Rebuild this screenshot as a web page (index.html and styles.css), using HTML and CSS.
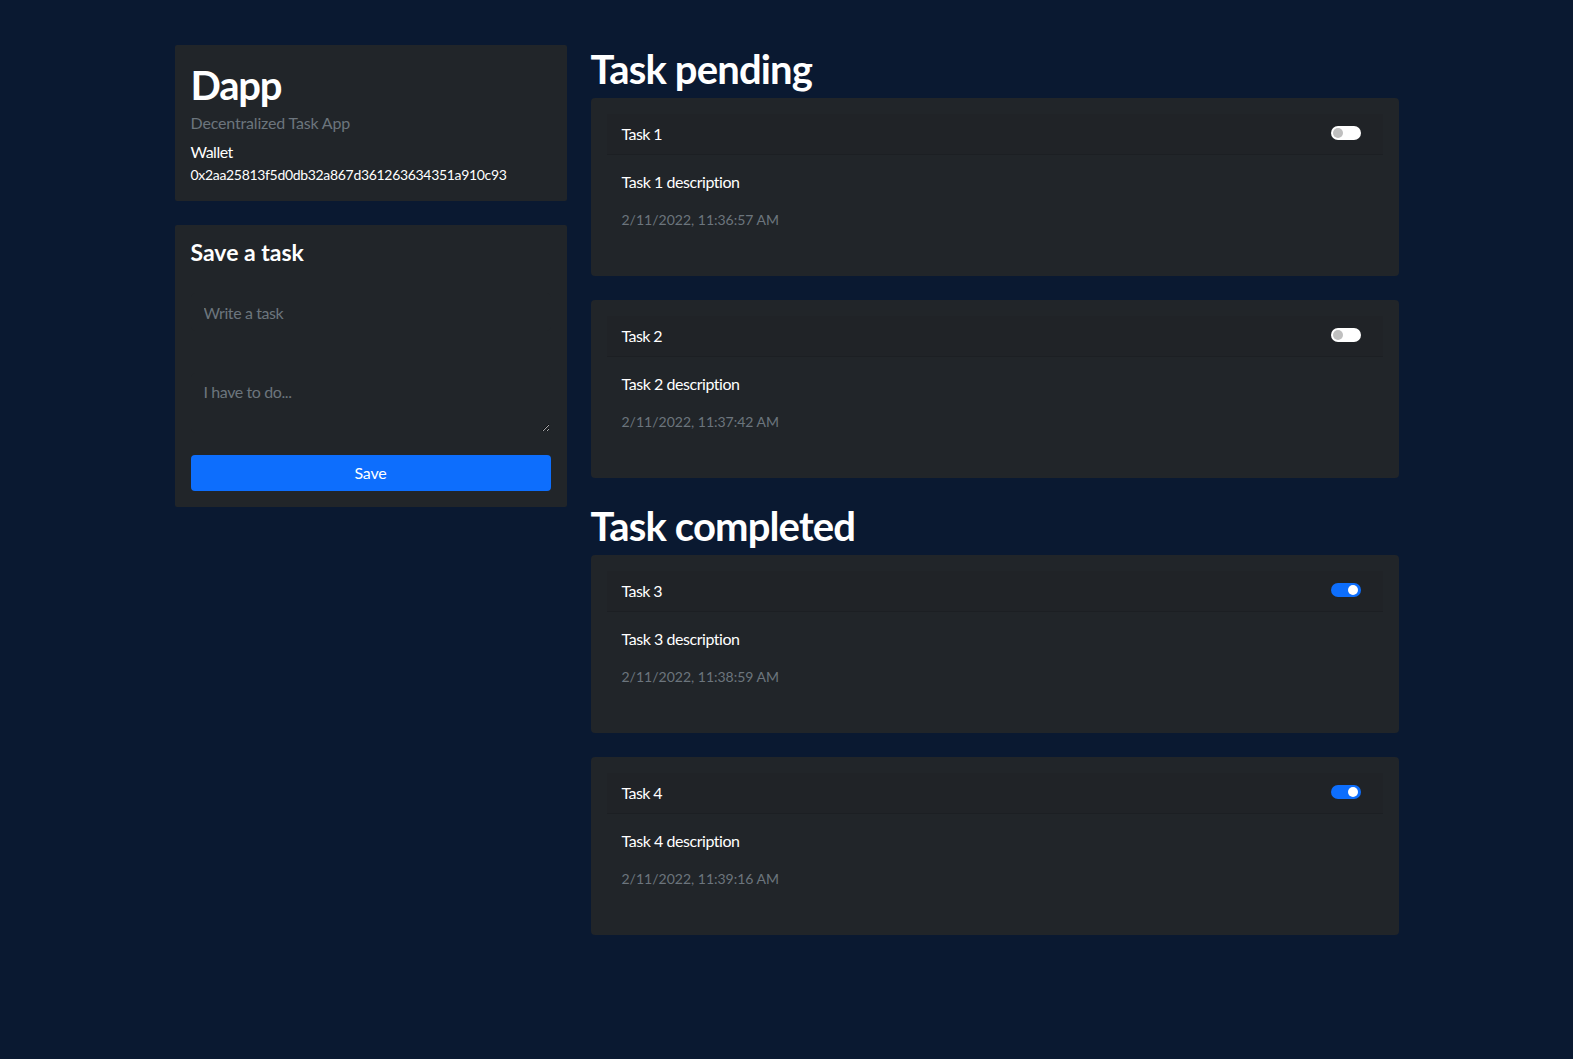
FILE: index.html
```html
<!DOCTYPE html>
<html lang="en">
<head>
<meta charset="utf-8">
<title>Dapp</title>
<link rel="stylesheet" href="styles.css">
</head>
<body>
<div class="container">
  <aside class="sidebar">
    <section class="panel info">
      <h1 class="brand">Dapp</h1>
      <p class="subtitle">Decentralized Task App</p>
      <p class="wallet-label">Wallet</p>
      <p class="wallet-address">0x2aa25813f5d0db32a867d361263634351a910c93</p>
    </section>
    <section class="panel form-panel">
      <h4 class="form-title">Save a task</h4>
      <input class="field field-input" type="text" placeholder="Write a task">
      <textarea class="field field-area" placeholder="I have to do..."></textarea>
      <button class="btn-save" type="button">Save</button>
    </section>
  </aside>
  <main class="tasks">
    <h1 class="section-title">Task pending</h1>
    <div class="task-card">
      <div class="task-header"><span class="task-name">Task 1</span><span class="switch"></span></div>
      <div class="task-body"><p class="desc">Task 1 description</p><p class="date">2/11/2022, 11:36:57 AM</p></div>
    </div>
    <div class="task-card">
      <div class="task-header"><span class="task-name">Task 2</span><span class="switch"></span></div>
      <div class="task-body"><p class="desc">Task 2 description</p><p class="date">2/11/2022, 11:37:42 AM</p></div>
    </div>
    <h1 class="section-title">Task completed</h1>
    <div class="task-card">
      <div class="task-header"><span class="task-name">Task 3</span><span class="switch on"></span></div>
      <div class="task-body"><p class="desc">Task 3 description</p><p class="date">2/11/2022, 11:38:59 AM</p></div>
    </div>
    <div class="task-card">
      <div class="task-header"><span class="task-name">Task 4</span><span class="switch on"></span></div>
      <div class="task-body"><p class="desc">Task 4 description</p><p class="date">2/11/2022, 11:39:16 AM</p></div>
    </div>
  </main>
</div>
</body>
</html>
```
FILE: styles.css
```css
* { box-sizing: border-box; }
html, body { margin: 0; }
body {
  background: #0a1931;
  color: #fff;
  font-family: Lato, "Open Sans", sans-serif;
  font-size: 16px;
  line-height: 24px;
  min-height: 1059px;
}
p { margin: 0; }
.container {
  width: 1224px;
  margin: 0 auto;
  padding-top: 45px;
  display: grid;
  grid-template-columns: 392px 808px;
  column-gap: 24px;
  align-items: start;
}
.panel {
  background: #212529;
  border-radius: 2px;
  padding: 16px;
}
.info { margin-bottom: 24px; }
.brand {
  font-size: 40px;
  line-height: 48px;
  font-weight: 700;
  letter-spacing: -1.2px;
  margin: 0 0 2px;
}
.subtitle { color: #6c757d; margin-bottom: 5px; letter-spacing: -0.17px; }
.wallet-label { letter-spacing: -0.5px; }
.wallet-address { font-size: 14px; line-height: 21px; letter-spacing: -0.32px; }
.form-panel { padding-top: 13px; }
.form-title {
  font-size: 23px;
  line-height: 29px;
  font-weight: 700;
  margin: 0 0 26px;
}
.field {
  display: block;
  width: 100%;
  background: #212529;
  border: 1px solid #212529;
  color: #fff;
  font: inherit;
  letter-spacing: -0.4px;
  padding: 6px 12px;
  border-radius: 4px;
  outline: none;
}
.field::placeholder { color: #6c757d; }
.field-input { height: 38px; margin-bottom: 42px; }
.field-area { height: 60px; margin-bottom: 22px; resize: vertical; }
.btn-save {
  display: block;
  width: 100%;
  height: 36px;
  background: #0d6efd;
  color: #fff;
  border: 0;
  border-radius: 4px;
  font: inherit;
  letter-spacing: -0.2px;
}
.section-title {
  font-size: 40px;
  line-height: 48px;
  font-weight: 700;
  letter-spacing: -0.85px;
  margin: 0 0 5px;
}
.task-card {
  background: #212529;
  border-radius: 4px;
  padding: 16px;
  margin-bottom: 24px;
}
.task-header {
  background: #202327;
  border-bottom: 1px solid #1c1f23;
  height: 41px;
  padding: 0 22px 0 15px;
  display: flex;
  align-items: center;
  justify-content: space-between;
}
.task-name { letter-spacing: -0.6px; }
.task-body { padding: 15px 16px 16px 15px; }
.desc { margin-bottom: 14px; letter-spacing: -0.45px; }
.date { color: #6c757d; font-size: 14px; margin-bottom: 12px; }
.switch {
  position: relative;
  width: 30px;
  height: 14px;
  border-radius: 7px;
  background: #fff;
  margin-top: -2px;
}
.switch::after {
  content: "";
  position: absolute;
  top: 2px;
  left: 2px;
  width: 10px;
  height: 10px;
  border-radius: 50%;
  background: #bfbfbf;
}
.switch.on { background: #0d6efd; }
.switch.on::after { left: auto; right: 3px; background: #fff; }
```
